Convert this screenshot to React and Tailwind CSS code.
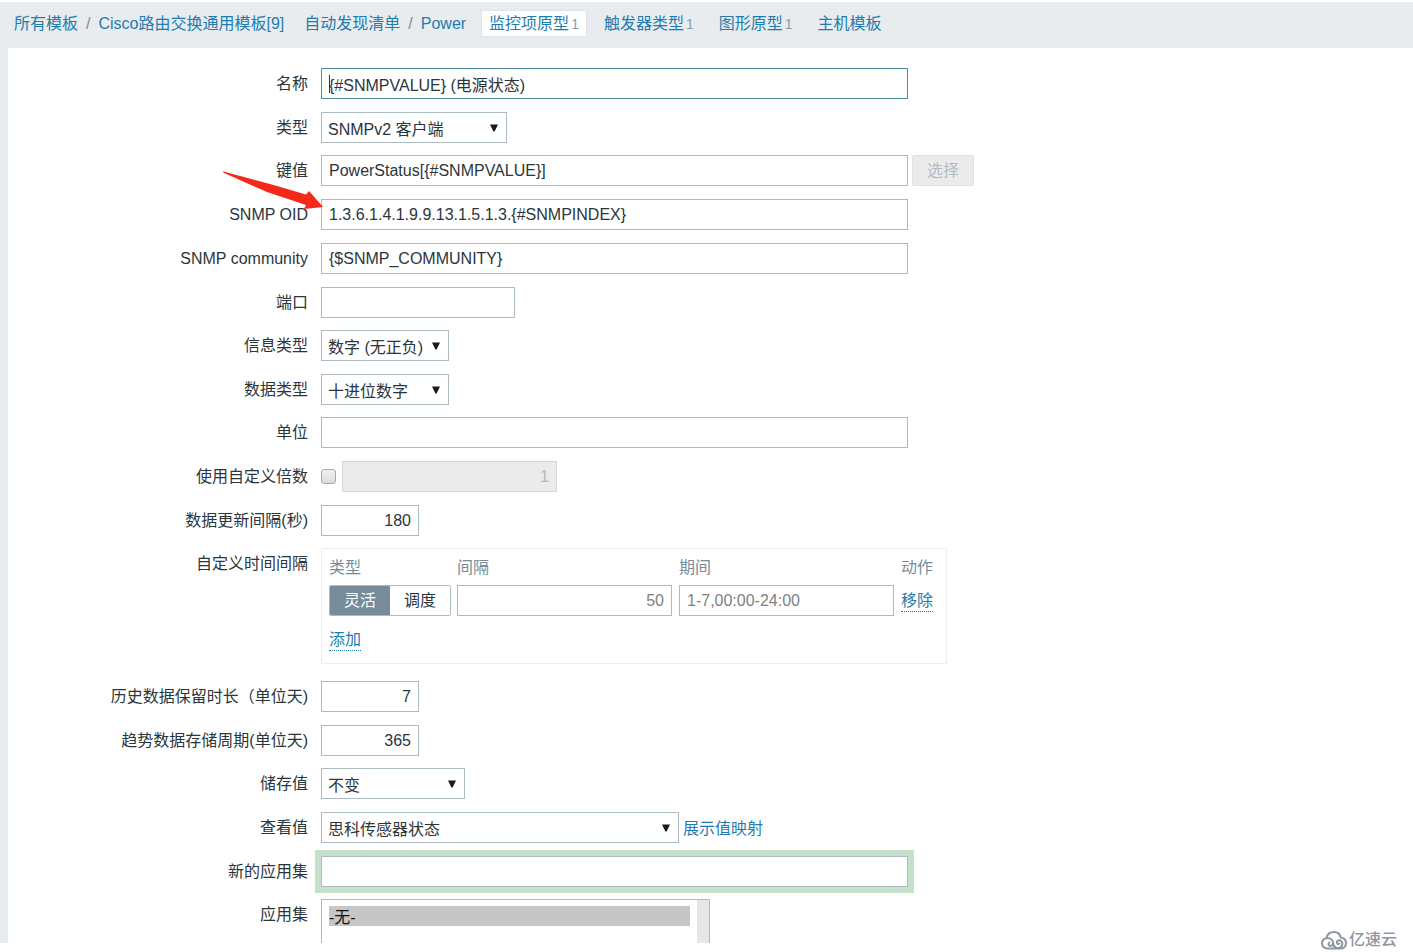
import React, { useState } from "react";
import clsx from "clsx";

const inputBase =
  "h-[31px] border border-[#acbbc2] bg-white px-[7px] text-[#2b363c] outline-none";

const Row = ({ label, htmlFor, className = "mb-[13px]", children }) => (
  <div className={clsx("flex items-start gap-[13px]", className)}>
    <label htmlFor={htmlFor} className="w-[300px] shrink-0 text-right leading-[31px]">
      {label}
    </label>
    <div className="flex min-w-0 flex-1 items-center gap-1">{children}</div>
  </div>
);

const TextField = ({ id, value = "", className = "w-full max-w-[587px]", ...rest }) => {
  const [text, setText] = useState(value);
  return (
    <input
      id={id}
      type="text"
      value={text}
      onChange={(e) => setText(e.target.value)}
      className={clsx(inputBase, className)}
      {...rest}
    />
  );
};

const SelectField = ({ id, options, className }) => (
  <div className={clsx("relative", className)}>
    <select
      id={id}
      className="h-[31px] w-full appearance-none border border-[#acbbc2] bg-white pt-1 pr-6 pl-1.5 text-[#2b363c] outline-none"
    >
      {options.map((option) => (
        <option key={option}>{option}</option>
      ))}
    </select>
    <svg viewBox="0 0 8 8" className="pointer-events-none absolute top-3 right-[9px] h-2 w-2" fill="#1a1a1a">
      <path d="M0 0.5h8L4.6 7.5H3.4z" />
    </svg>
  </div>
);

const NavLink = ({ children, count, active }) => (
  <a
    href="#"
    className={clsx(
      "border px-[7px] leading-[25px]",
      active ? "border-[#dfe4e7] bg-white" : "border-transparent"
    )}
  >
    <span>{children}</span>
    {count && <span className="ml-0.5 text-sm text-[#8d9ba3]">{count}</span>}
  </a>
);

const Header = () => (
  <nav className="flex h-[46px] items-start bg-[#e8ecef] pt-2 pl-[14px] whitespace-nowrap text-[#1f7cae]">
    <div className="flex gap-2 leading-[27px]">
      <a href="#">所有模板</a>
      <span className="text-[#768d99]">/</span>
      <a href="#">Cisco路由交换通用模板[9]</a>
    </div>
    <div className="ml-5 flex gap-2 leading-[27px]">
      <a href="#">自动发现清单</a>
      <span className="text-[#768d99]">/</span>
      <a href="#">Power</a>
    </div>
    <div className="ml-[15px] flex gap-[9px]">
      <NavLink count="1" active>监控项原型</NavLink>
      <NavLink count="1">触发器类型</NavLink>
      <NavLink count="1">图形原型</NavLink>
      <NavLink>主机模板</NavLink>
    </div>
  </nav>
);

const IntervalTable = () => {
  const [mode, setMode] = useState("灵活");
  return (
    <div className="h-[116px] border border-[#ebeef0] px-[7px] pt-1.5">
      <table className="border-collapse text-left">
        <thead className="text-[#768d99]">
          <tr className="h-[30px] align-top leading-[26px]">
            <th className="w-32 p-0 font-normal">类型</th>
            <th className="w-[222px] p-0 font-normal">间隔</th>
            <th className="w-[222px] p-0 font-normal">期间</th>
            <th className="p-0 pr-1.5 font-normal">动作</th>
          </tr>
        </thead>
        <tbody>
          <tr>
            <td className="p-0">
              <div className="flex w-[122px] overflow-hidden rounded-xs border border-[#acbbc2]">
                {["灵活", "调度"].map((name) => (
                  <button
                    key={name}
                    type="button"
                    onClick={() => setMode(name)}
                    className={clsx(
                      "h-[29px] flex-1",
                      mode === name ? "bg-[#768d99] text-white" : "bg-white"
                    )}
                  >
                    {name}
                  </button>
                ))}
              </div>
            </td>
            <td className="p-0">
              <input
                aria-label="间隔"
                placeholder="50"
                className={clsx(inputBase, "block w-[215px] text-right placeholder:text-[#7f7f7f]")}
              />
            </td>
            <td className="p-0">
              <input
                aria-label="期间"
                placeholder="1-7,00:00-24:00"
                className={clsx(inputBase, "block w-[215px] placeholder:text-[#7f7f7f]")}
              />
            </td>
            <td className="p-0">
              <button type="button" className="border-b border-dotted border-[#1f7cae] leading-5 text-[#1f7cae]">
                移除
              </button>
            </td>
          </tr>
        </tbody>
      </table>
      <button type="button" className="mt-3.5 border-b border-dotted border-[#1f7cae] leading-5 text-[#1f7cae]">
        添加
      </button>
    </div>
  );
};

const Arrow = () => (
  <svg viewBox="0 0 102 42" className="pointer-events-none absolute top-[121px] left-[214px] h-[42px] w-[102px]" fill="#f5291b">
    <path d="M1 3.5L1.500 2.500L48 15L84 25.500L87 22L101 38L82 40L84 36L78 34L45 23Z" />
  </svg>
);

const Watermark = () => (
  <div className="absolute right-4 bottom-0.5 flex items-center gap-0.5 text-[#8f969f]">
    <svg viewBox="0 0 26 20" className="h-5 w-[26px]" fill="none" stroke="currentColor" strokeWidth="2" strokeLinecap="round">
      <path d="M5.500 7.500C6.500 4 9.500 2 13 2C16.500 2 19 4 19.800 7.500C23 8 25 10.300 25 13C25 16.200 22.800 18.500 19.500 18.500H6.500C3.200 18.500 1 16.200 1 13.200C1 10.300 3.500 8 6.500 8C9.800 8 12 10.300 12 13C12 15 10.500 16.300 8.800 15.800C7.300 15.300 7 13.300 8.300 12.500" />
      <path d="M12 13C12.500 16.500 14.500 18 17 18C20 18 21.500 16 21.300 13.500C21.200 11.300 19.500 10 17.800 10.200C16 10.500 15.300 12.300 16.200 13.500C16.800 14.200 17.800 14.200 18.300 13.600" />
    </svg>
    <span className="leading-5 font-medium">亿速云</span>
  </div>
);

export default function App() {
  const [custom, setCustom] = useState(false);

  return (
    <div className="relative min-h-screen bg-white pt-0.5 font-['Liberation_Sans','Noto_Sans_CJK_SC',sans-serif] text-base text-[#2b363c]">
      <Header />
      <main className="relative border-l-8 border-[#e8ecef] bg-white pt-5">
        <form>
          <Row label="名称" htmlFor="name">
            <div className="relative w-full max-w-[587px]">
              <TextField
                id="name"
                value="{#SNMPVALUE} (电源状态)"
                className="block w-full border-[#4f8fa3]!"
              />
              {/* Text cursor */}
              <span className="pointer-events-none absolute top-[7px] left-2 h-[18px] w-px bg-[#2b363c]" />
            </div>
          </Row>
          <Row label="类型" htmlFor="type" className="mb-3">
            <SelectField id="type" options={["SNMPv2 客户端"]} className="w-[186px]" />
          </Row>
          <Row label="键值" htmlFor="key">
            <TextField id="key" value="PowerStatus[{#SNMPVALUE}]" />
            <button
              type="button"
              disabled
              className="h-[31px] w-[62px] shrink-0 rounded-xs border border-[#dfe1e2] bg-[#ebebeb] text-[#b0bcc2]"
            >
              选择
            </button>
          </Row>
          <Row label="SNMP OID" htmlFor="oid">
            <TextField id="oid" value="1.3.6.1.4.1.9.9.13.1.5.1.3.{#SNMPINDEX}" />
          </Row>
          <Row label="SNMP community" htmlFor="community">
            <TextField id="community" value="{$SNMP_COMMUNITY}" />
          </Row>
          <Row label="端口" htmlFor="port" className="mb-3">
            <TextField id="port" className="w-[194px]" />
          </Row>
          <Row label="信息类型" htmlFor="valueType">
            <SelectField id="valueType" options={["数字 (无正负)"]} className="w-32" />
          </Row>
          <Row label="数据类型" htmlFor="dataType" className="mb-3">
            <SelectField id="dataType" options={["十进位数字"]} className="w-32" />
          </Row>
          <Row label="单位" htmlFor="units">
            <TextField id="units" />
          </Row>
          <Row label="使用自定义倍数" htmlFor="multiplier">
            <input
              id="multiplier"
              type="checkbox"
              checked={custom}
              onChange={(e) => setCustom(e.target.checked)}
              className="mr-0.5 h-[15px] w-[15px] appearance-none rounded-[3px] border border-[#a9a9a9] bg-linear-to-b from-[#f0f0f0] to-[#dcdcdc] checked:bg-[#768d99]"
            />
            <input
              aria-label="倍数"
              defaultValue="1"
              disabled={!custom}
              className="h-[31px] w-[215px] border border-[#d3d7d9] bg-[#ebebeb] px-[7px] text-right text-[#b0bcc2]"
            />
          </Row>
          <Row label="数据更新间隔(秒)" htmlFor="delay" className="mb-3">
            <TextField id="delay" value="180" className="w-[98px] text-right" />
          </Row>
          <Row label="自定义时间间隔" className="mb-[17px]">
            <IntervalTable />
          </Row>
          <Row label="历史数据保留时长（单位天)" htmlFor="history">
            <TextField id="history" value="7" className="w-[98px] text-right" />
          </Row>
          <Row label="趋势数据存储周期(单位天)" htmlFor="trends" className="mb-3">
            <TextField id="trends" value="365" className="w-[98px] text-right" />
          </Row>
          <Row label="储存值" htmlFor="delta">
            <SelectField id="delta" options={["不变"]} className="w-36" />
          </Row>
          <Row label="查看值" htmlFor="valueMap">
            <SelectField id="valueMap" options={["思科传感器状态"]} className="w-[358px]" />
            <a href="#" className="pt-0.5 text-[#1f7cae]">展示值映射</a>
          </Row>
          <Row label="新的应用集" htmlFor="newApp" className="mb-3">
            <TextField
              id="newApp"
              className="w-full max-w-[587px] ring-[6px] ring-[#c5e1c9]"
            />
          </Row>
          <Row label="应用集" htmlFor="apps" className="h-11 overflow-hidden">
            <div className="flex h-24 w-[389px] self-start border border-[#acbbc2]">
              <select
                id="apps"
                multiple
                defaultValue={["0"]}
                className="h-full min-w-0 flex-1 appearance-none overflow-hidden bg-white px-[7px] py-1.5 outline-none"
              >
                <option value="0" className="flex h-5 items-center bg-[#c6c6c6] p-0">-无-</option>
              </select>
              <div className="w-3 bg-[#e6e6e6]" />
            </div>
          </Row>
        </form>
        <Arrow />
      </main>
      <Watermark />
    </div>
  );
}
